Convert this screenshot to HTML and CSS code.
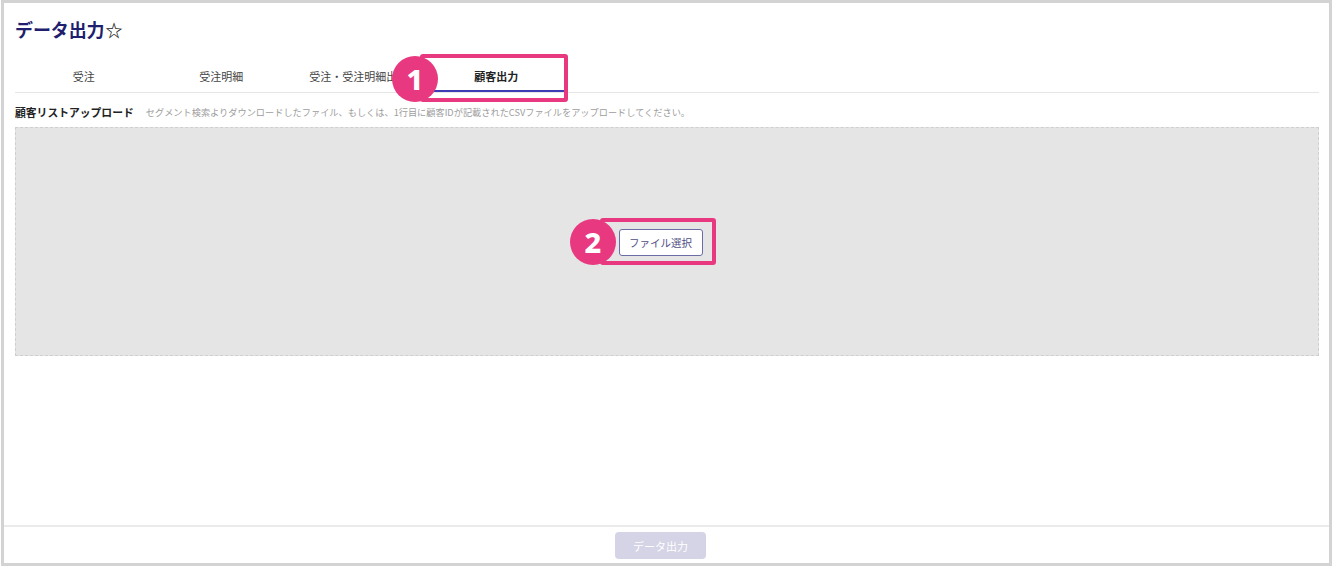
FILE: index.html
```html
<!DOCTYPE html>
<html lang="ja">
<head>
<meta charset="utf-8">
<title>データ出力</title>
<link rel="stylesheet" href="styles.css">
</head>
<body>
<div class="frame">
  <div class="main">
    <h1 class="title">データ出力<span class="star">☆</span></h1>
    <div class="tabs">
      <div class="tab">受注</div>
      <div class="tab">受注明細</div>
      <div class="tab">受注・受注明細出力</div>
      <div class="tab active">顧客出力</div>
    </div>
    <div class="upload-head">
      <span class="upload-label">顧客リストアップロード</span>
      <span class="upload-desc">セグメント検索よりダウンロードしたファイル、もしくは、1行目に顧客IDが記載されたCSVファイルをアップロードしてください。</span>
    </div>
    <div class="dropzone">
      <button class="file-btn">ファイル選択</button>
    </div>
  </div>
  <div class="footer">
    <button class="export-btn">データ出力</button>
  </div>
</div>
<div class="callout callout-1"></div>
<div class="badge badge-1">1</div>
<div class="callout callout-2"></div>
<div class="badge badge-2">2</div>
</body>
</html>
```
FILE: styles.css
```css
html, body {
  margin: 0;
  padding: 0;
  background: #fff;
}
body {
  font-family: "Noto Sans CJK JP", "Noto Sans", sans-serif;
  color: #333;
  width: 1333px;
  height: 567px;
  overflow: hidden;
  position: relative;
}
.frame {
  box-sizing: border-box;
  margin-left: 1px;
  width: 1331px;
  height: 566px;
  border: 3px solid #d3d3d3;
  display: flex;
  flex-direction: column;
}
.main {
  flex: 1;
  padding: 0 10px 0 11px;
}
.title {
  margin: 14px 0 0 0;
  height: 24px;
  line-height: 24px;
  font-size: 18px;
  font-weight: 700;
  color: #1f1f6e;
  letter-spacing: -0.1px;
}
.star {
  font-size: 17px;
  font-weight: 700;
  color: #222;
  margin-left: 1px;
}
.tabs {
  display: flex;
  margin-top: 20px;
  border-bottom: 1px solid #e6e6e6;
}
.tab {
  box-sizing: border-box;
  width: 137.5px;
  height: 31px;
  line-height: 31px;
  text-align: center;
  font-size: 11px;
  color: #444;
}
.tab.active {
  font-weight: 700;
  color: #222;
  border-bottom: 2px solid #3c3cb4;
}
.upload-head {
  margin-top: 11px;
  height: 16px;
  line-height: 16px;
  display: flex;
  align-items: center;
  white-space: nowrap;
}
.upload-label {
  font-size: 10.8px;
  font-weight: 700;
  color: #222;
}
.upload-desc {
  font-size: 9.2px;
  color: #9d9d9d;
  margin-left: 12px;
}
.dropzone {
  box-sizing: border-box;
  margin-top: 7px;
  height: 229px;
  background: #e5e5e5;
  border: 1px dashed #cfcfcf;
  display: flex;
  align-items: center;
  justify-content: center;
  padding-right: 13px;
}
.file-btn {
  box-sizing: border-box;
  width: 84px;
  height: 27px;
  background: #fff;
  border: 1px solid #6b6ba6;
  border-radius: 3px;
  font-family: inherit;
  font-size: 10.5px;
  color: #4e4e84;
  padding: 0;
  margin-top: 1px;
}
.footer {
  box-sizing: border-box;
  height: 38px;
  border-top: 2px solid #ebebeb;
  display: flex;
  justify-content: center;
  padding: 5px 12px 0 0;
}
.export-btn {
  box-sizing: border-box;
  width: 91px;
  height: 27px;
  background: #d4d4e6;
  border: none;
  border-radius: 4px;
  font-family: inherit;
  font-size: 11px;
  color: #fff;
  padding: 0;
}
.callout {
  position: absolute;
  box-sizing: border-box;
  border: 4px solid #e8387f;
  border-radius: 3px;
}
.callout-1 {
  left: 420px;
  top: 54px;
  width: 148px;
  height: 48px;
}
.callout-2 {
  left: 600px;
  top: 218px;
  width: 116px;
  height: 47px;
}
.badge {
  position: absolute;
  width: 46px;
  height: 46px;
  border-radius: 50%;
  background: #e8387f;
  color: #fff;
  font-family: "Noto Sans", "DejaVu Sans", sans-serif;
  font-weight: 800;
  font-size: 29px;
  line-height: 46px;
  text-align: center;
}
.badge-1 {
  left: 392px;
  top: 56px;
}
.badge-2 {
  left: 570px;
  top: 219px;
}
```
